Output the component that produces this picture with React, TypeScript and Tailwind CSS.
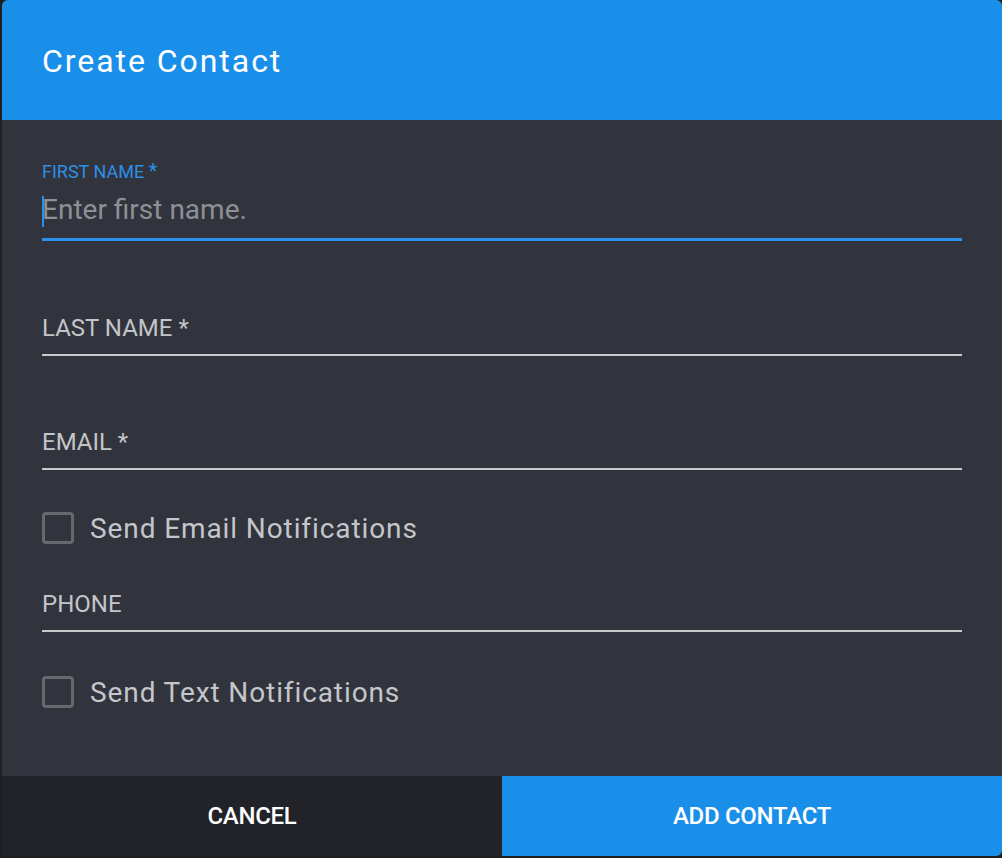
import React from "react";

function Checkbox({ label }: { label: string }) {
  return (
    <label className="flex items-center h-[32px]">
      <span className="w-[32px] h-[32px] rounded-[4px] border-[3px] border-[#66686d] shrink-0" />
      <span className="ml-[16px] text-[28px] leading-[33px] tracking-[0.9px] text-[#c4c6ca]">{label}</span>
    </label>
  );
}

function Field({ label }: { label: string }) {
  return (
    <div className="border-b-2 border-[#c9c9cb] pb-[12px]">
      <div className="text-[24px] leading-[28px] text-[#c3c5c9]">{label}</div>
    </div>
  );
}

export default function App() {
  return (
    <div className="w-[1002px] h-[858px] bg-[#1d1f23] overflow-hidden" style={{ fontFamily: "Roboto, 'Noto Sans', sans-serif" }}>
      <div className="ml-[2px] w-[1000px] h-[856px] rounded-[6px] overflow-hidden flex flex-col bg-[#31343d]">
        <div className="h-[120px] bg-[#1a8fe9] flex items-center px-[40px] pt-[2px]">
          <h1 className="text-[32px] leading-[40px] tracking-[1.95px] text-white font-normal">Create Contact</h1>
        </div>
        <div className="flex-1 px-[40px] pt-[41px]">
          <div className="border-b-[3px] border-[#2d8eeb]">
            <div className="text-[18px] leading-[21px] text-[#2e8fe6]">FIRST NAME <span className="text-[20px]">*</span></div>
            <div className="mt-[11px] mb-[12px] h-[33px] flex items-center relative">
              <span className="absolute left-0 top-[3px] w-[2px] h-[31px] bg-[#2d8eeb]" />
              <span className="text-[28px] leading-[33px] text-[#8e9095]">Enter first name.</span>
            </div>
          </div>
          <div className="mt-[73px]">
            <Field label="LAST NAME *" />
          </div>
          <div className="mt-[72px]">
            <Field label="EMAIL *" />
          </div>
          <div className="mt-[42px]">
            <Checkbox label="Send Email Notifications" />
          </div>
          <div className="mt-[46px]">
            <Field label="PHONE" />
          </div>
          <div className="mt-[44px]">
            <Checkbox label="Send Text Notifications" />
          </div>
        </div>
        <div className="h-[80px] flex">
          <button className="w-[500px] h-full bg-[#212328] text-white text-[24px] font-medium tracking-[-0.3px]">CANCEL</button>
          <button className="w-[500px] h-full bg-[#1a8fe9] text-white text-[24px] font-medium tracking-[-0.3px]">ADD CONTACT</button>
        </div>
      </div>
    </div>
  );
}
